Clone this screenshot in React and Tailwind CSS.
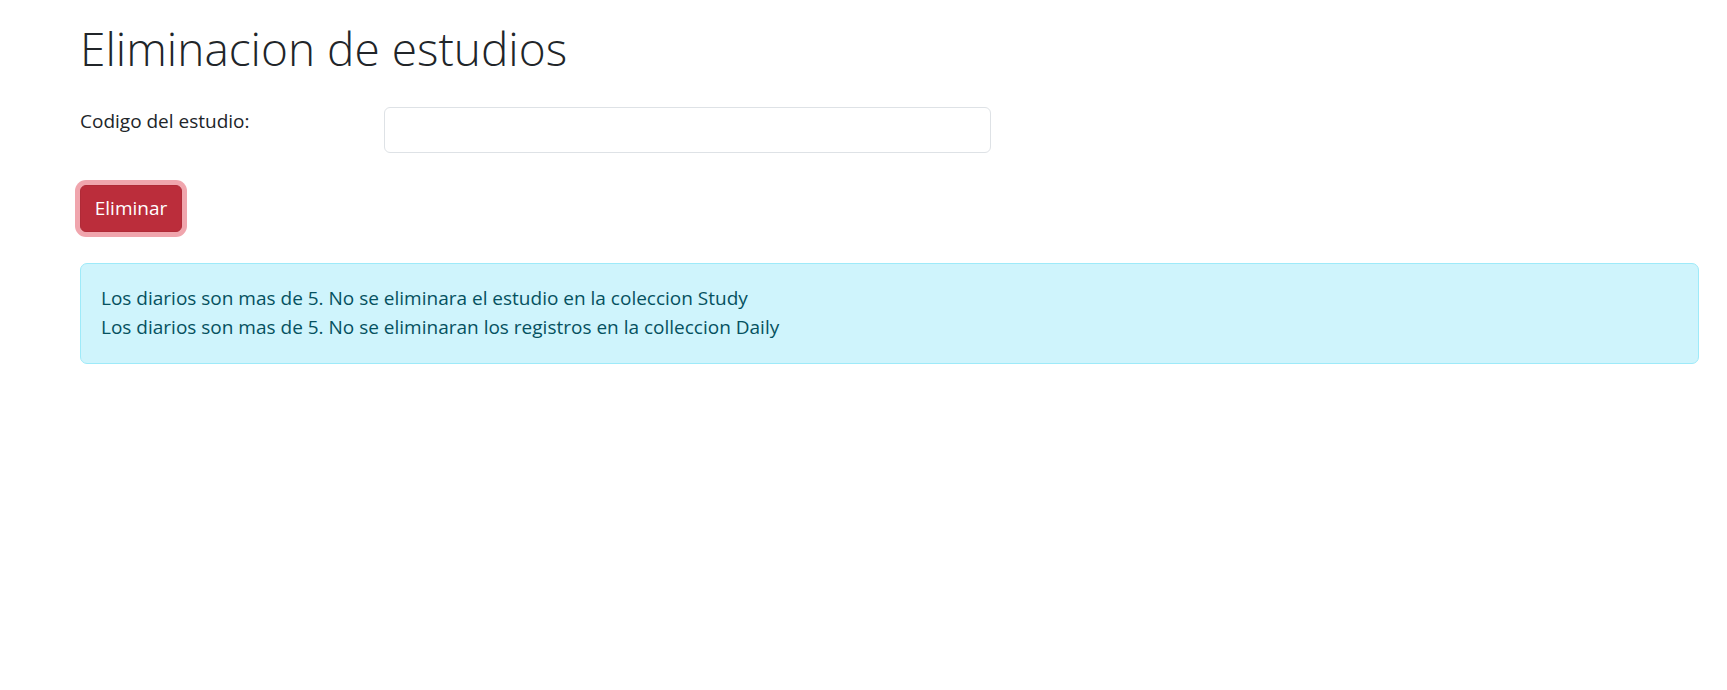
export default function App() {
  return (
    <div className="min-h-[690px] bg-white pl-[80px] pr-[28px] pt-[19px]" style={{ fontFamily: '"Open Sans", "Noto Sans", sans-serif' }}>
      <h1 className="m-0 text-[46px] font-light leading-[58px] text-[#212529]">Eliminacion de estudios</h1>
      <div className="mt-[30px] flex items-start">
        <label className="w-[304px] shrink-0 text-[19px] leading-[29px] text-[#212529]">Codigo del estudio:</label>
        <input type="text" className="h-[46px] w-[607px] rounded-[6px] border border-[#dee2e6] bg-white px-[14px] text-[19px] outline-none" />
      </div>
      <div className="mt-[32px]">
        <button className="h-[47px] w-[102px] rounded-[6px] border border-[#b02a37] bg-[#bb2d3b] text-[19px] leading-[29px] text-white shadow-[0_0_0_5px_#f0a5ad]">Eliminar</button>
      </div>
      <div className="mt-[31px] rounded-[7px] border border-[#9eeaf9] bg-[#cff4fc] px-[20px] py-[20px] text-[19px] leading-[29.3px] text-[#055160]">
        <div>Los diarios son mas de 5. No se eliminara el estudio en la coleccion Study</div>
        <div>Los diarios son mas de 5. No se eliminaran los registros en la colleccion Daily</div>
      </div>
    </div>
  );
}
